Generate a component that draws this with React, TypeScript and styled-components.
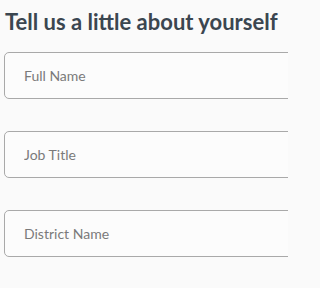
import React from "react";
import styled, { createGlobalStyle } from "styled-components";

const Global = createGlobalStyle`
  html, body { margin: 0; padding: 0; background: #fafafa; }
  body { font-family: Lato, "Noto Sans", sans-serif; }
`;

const Page = styled.div`
  width: 288px;
  height: 288px;
  overflow: hidden;
  box-sizing: border-box;
  padding: 8px 0 0 4px;
`;

const Title = styled.h1`
  margin: 0 0 0 1px;
  font-family: Lato, sans-serif;
  font-weight: 700;
  font-size: 22px;
  line-height: 28px;
  color: #3b4650;
  white-space: nowrap;
`;

const Form = styled.form`
  display: flex;
  flex-direction: column;
  gap: 32px;
  margin-top: 16px;
`;

const Field = styled.input`
  box-sizing: border-box;
  flex: none;
  width: 340px;
  height: 47px;
  border: 1px solid #a9a9a9;
  border-radius: 5px;
  background: #fcfcfc;
  padding: 0 0 0 19px;
  font-family: Lato, sans-serif;
  font-size: 14px;
  color: #333;
  outline: none;
  &::placeholder { color: #7a7a7a; }
`;

export default function App() {
  return (
    <>
      <Global />
      <Page>
        <Title>Tell us a little about yourself</Title>
        <Form>
          <Field placeholder="Full Name" />
          <Field placeholder="Job Title" />
          <Field placeholder="District Name" />
        </Form>
      </Page>
    </>
  );
}
